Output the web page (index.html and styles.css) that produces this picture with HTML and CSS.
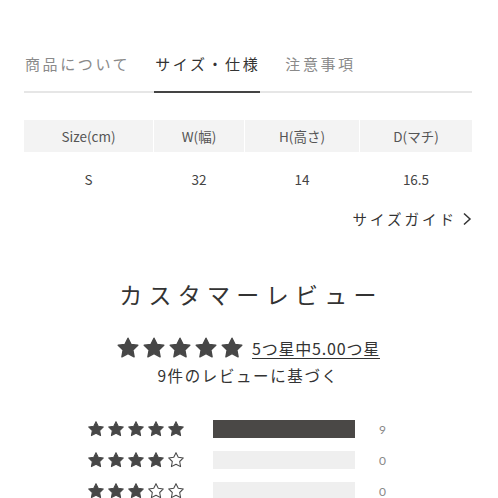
FILE: index.html
```html
<!DOCTYPE html>
<html lang="ja">
<head>
  <meta charset="UTF-8">
  <meta name="viewport" content="width=device-width, initial-scale=1.0">
  <title>サイズ・仕様</title>
  <link rel="stylesheet" href="styles.css">
</head>
<body>
  <svg width="0" height="0" class="defs">
    <symbol id="star" viewBox="0 0 24 24">
      <polygon points="12,2.2 15,8.4 21.8,9.3 16.9,14 18.1,20.8 12,17.6 5.9,20.8 7.1,14 2.2,9.3 9,8.4"/>
    </symbol>
  </svg>

  <div class="page">
    <!-- tabs -->
    <ul class="tabs">
      <li class="tab">商品について</li>
      <li class="tab active">サイズ・仕様</li>
      <li class="tab">注意事項</li>
    </ul>

    <!-- size table -->
    <div class="size-table">
      <div class="cell head">Size(cm)</div>
      <div class="cell head">W(幅)</div>
      <div class="cell head">H(高さ)</div>
      <div class="cell head">D(マチ)</div>
      <div class="cell">S</div>
      <div class="cell">32</div>
      <div class="cell">14</div>
      <div class="cell">16.5</div>
    </div>

    <div class="guide">
      <a class="guide-link">サイズガイド
        <svg class="chevron" viewBox="0 0 10 14"><polyline points="2,1.5 8,7 2,12.5"/></svg>
      </a>
    </div>

    <!-- reviews -->
    <h2 class="review-title">カスタマーレビュー</h2>

    <div class="summary">
      <span class="stars big">
        <svg><use href="#star"/></svg><svg><use href="#star"/></svg><svg><use href="#star"/></svg><svg><use href="#star"/></svg><svg><use href="#star"/></svg>
      </span>
      <a class="avg">5つ星中5.00つ星</a>
    </div>
    <p class="based">9件のレビューに基づく</p>

    <div class="hist">
      <div class="hist-row">
        <span class="stars small">
          <svg><use href="#star"/></svg><svg><use href="#star"/></svg><svg><use href="#star"/></svg><svg><use href="#star"/></svg><svg><use href="#star"/></svg>
        </span>
        <div class="bar"><div class="fill" style="width:100%"></div></div>
        <span class="count">9</span>
      </div>
      <div class="hist-row">
        <span class="stars small">
          <svg><use href="#star"/></svg><svg><use href="#star"/></svg><svg><use href="#star"/></svg><svg><use href="#star"/></svg><svg class="off"><use href="#star"/></svg>
        </span>
        <div class="bar"><div class="fill" style="width:0%"></div></div>
        <span class="count">0</span>
      </div>
      <div class="hist-row">
        <span class="stars small">
          <svg><use href="#star"/></svg><svg><use href="#star"/></svg><svg><use href="#star"/></svg><svg class="off"><use href="#star"/></svg><svg class="off"><use href="#star"/></svg>
        </span>
        <div class="bar"><div class="fill" style="width:0%"></div></div>
        <span class="count">0</span>
      </div>
    </div>
  </div>
</body>
</html>
```

FILE: styles.css
```css
body {
  margin: 0;
  background: #fff;
  color: #333;
  font-family: "Noto Sans CJK JP", "Noto Sans", sans-serif;
}

.defs { position: absolute; }

.page {
  padding: 54px 26px 0 24px;
}

/* tabs */
.tabs {
  list-style: none;
  margin: 0;
  padding: 0;
  display: flex;
  gap: 24px;
  border-bottom: 2px solid #e6e6e6;
}

.tab {
  position: relative;
  font-size: 15px;
  line-height: 20px;
  letter-spacing: 2.6px;
  color: #8a8a8a;
  padding: 0 0 17px 1px;
}

.tab.active { color: #333; }

.tab.active::after {
  content: "";
  position: absolute;
  left: 0;
  right: 0;
  bottom: -2px;
  height: 2px;
  background: #444;
}

/* size table */
.size-table {
  margin-top: 27px;
  display: grid;
  grid-template-columns: 129px 90px 114px 1fr;
  column-gap: 1px;
}

.cell {
  height: 54px;
  display: flex;
  align-items: center;
  justify-content: center;
  font-size: 13.5px;
  color: #444;
}

.cell.head {
  height: 32px;
  background: #f3f3f3;
  color: #555;
}

.guide {
  margin-top: 3px;
  display: flex;
  justify-content: flex-end;
}

.guide-link {
  display: flex;
  align-items: center;
  gap: 5px;
  font-size: 14.5px;
  line-height: 20px;
  letter-spacing: 3px;
  color: #333;
}

.chevron {
  width: 10px;
  height: 14px;
  fill: none;
  stroke: #333;
  stroke-width: 1.5;
}

/* reviews */
.review-title {
  margin: 49px 0 0;
  text-align: center;
  font-size: 23px;
  font-weight: 400;
  line-height: 32px;
  letter-spacing: 6.3px;
  padding-left: 6px;
  color: #333;
}

.summary {
  margin-top: 26px;
  display: flex;
  justify-content: center;
  align-items: center;
  gap: 8px;
  height: 24px;
}

.stars {
  display: flex;
  gap: 2px;
}

.stars svg {
  fill: #474747;
  stroke: #474747;
  stroke-width: 1.4;
  stroke-linejoin: round;
}

.stars svg.off { fill: none; }

.stars.big svg { width: 24px; height: 24px; }
.stars.small svg { width: 18px; height: 18px; }

.avg {
  font-size: 16px;
  line-height: 22px;
  letter-spacing: 0.8px;
  color: #333;
  text-decoration: underline;
  text-underline-offset: 3px;
}

.based {
  margin: 4px 0 0;
  text-align: center;
  font-size: 15.5px;
  line-height: 22px;
  letter-spacing: 1.6px;
  color: #333;
}

.hist {
  margin: 34px auto 0;
  width: 322px;
  display: flex;
  flex-direction: column;
  gap: 13px;
}

.hist-row {
  display: flex;
  align-items: center;
  height: 18px;
}

.bar {
  margin-left: 28px;
  width: 142px;
  height: 18px;
  background: #efefef;
}

.fill {
  height: 100%;
  background: #4a4846;
}

.count {
  margin-left: 24px;
  font-family: Lato, "Noto Sans", sans-serif;
  font-size: 12px;
  color: #888;
}
```
